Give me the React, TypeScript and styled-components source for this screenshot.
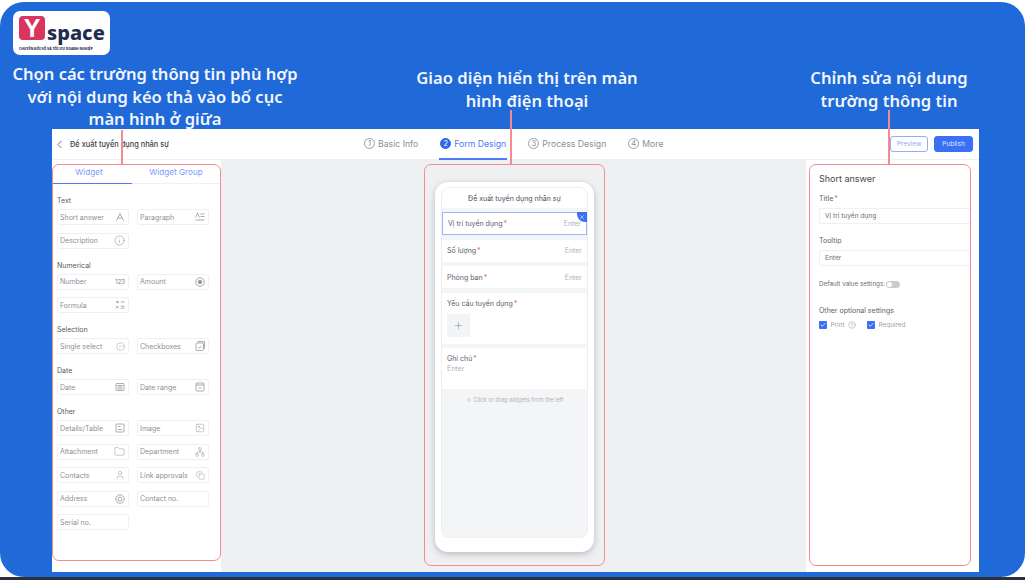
import React from 'react'
import styled, { createGlobalStyle } from 'styled-components'
import {
  ChevronLeft,
  CircleCheck,
  Copy,
  Folder,
  Image,
  Info,
  Network,
  Plus,
  User,
  X,
  Check,
  CircleHelp,
} from 'lucide-react'

const GlobalStyle = createGlobalStyle`
  html, body {
    margin: 0;
    padding: 0;
    background: #fff;
    overflow: hidden;
  }
  * {
    box-sizing: border-box;
  }
`

const Screen = styled.div`
  width: 1025px;
  height: 580px;
  display: flex;
  flex-direction: column;
  padding-top: 2px;
  background: linear-gradient(to bottom, #fff 577px, #2c3038 577px);
  font-family: Inter, 'Noto Sans', sans-serif;
`

const Slide = styled.div`
  height: 575px;
  background: #1f69d8;
  border-radius: 24px;
  display: flex;
  flex-direction: column;
`

const Captions = styled.div`
  height: 127px;
  display: grid;
  grid-template-columns: 300px 454px 270px;
`

const LeftCaption = styled.div`
  padding: 9px 0 0 13px;
  display: flex;
  flex-direction: column;
`

const Logo = styled.div`
  width: 97px;
  height: 44px;
  background: #fff;
  border-radius: 7px;
  padding: 5px 4px 0 6px;
  display: flex;
  flex-direction: column;
`

const LogoRow = styled.div`
  display: flex;
  align-items: flex-start;
  gap: 2px;
  height: 29px;
`

const LogoBadge = styled.div`
  width: 26px;
  height: 24px;
  background: #d9355f;
  border-radius: 4px;
  display: flex;
  align-items: center;
  justify-content: center;
  color: #fff;
  font-family: 'Liberation Sans', sans-serif;
  font-weight: 700;
  font-size: 25px;
  line-height: 24px;
`

const LogoWord = styled.div`
  margin-top: 6px;
  color: #1f2d50;
  font-family: 'Noto Sans', sans-serif;
  font-weight: 800;
  font-size: 20px;
  line-height: 22px;
`

const LogoTagline = styled.div`
  margin-top: 1px;
  color: #1f2d50;
  font-family: 'Noto Sans', sans-serif;
  font-weight: 800;
  font-size: 3.4px;
  line-height: 5px;
  white-space: nowrap;
`

const Heading = styled.div<{ $top: number }>`
  margin-top: ${(props) => props.$top}px;
  color: #f2f6fd;
  font-family: 'Noto Sans', sans-serif;
  font-weight: 600;
  font-size: 16.6px;
  line-height: 22.5px;
  text-align: center;
`

const LeftHeading = styled(Heading)`
  width: 290px;
  margin-left: -3px;
  font-size: 16.55px;
  white-space: nowrap;
`

const AppWindow = styled.div`
  width: 927px;
  height: 443px;
  margin-left: 52px;
  background: #fff;
  display: flex;
  flex-direction: column;
`

const TopBar = styled.div`
  height: 31px;
  flex: none;
  display: flex;
  align-items: stretch;
  border-bottom: 1px solid #f0f1f3;
`

const BackTitle = styled.div`
  width: 311px;
  display: flex;
  align-items: center;
  gap: 4px;
  padding-left: 1px;
  color: #3c4048;
  font-size: 7.4px;
  font-weight: 500;
  svg {
    color: #555;
  }
`

const Steps = styled.div`
  display: flex;
  gap: 20px;
  width: 527px;
`

const Step = styled.div<{ $active?: boolean }>`
  display: flex;
  align-items: center;
  gap: 3px;
  padding: 0 1px;
  height: 31px;
  font-size: 8.7px;
  white-space: nowrap;
  color: ${(props) => (props.$active ? '#4f7cf6' : '#8a8f98')};
  border-bottom: 2px solid ${(props) => (props.$active ? '#4f7cf6' : 'transparent')};
`

const StepNumber = styled.span<{ $active?: boolean }>`
  width: 11px;
  height: 11px;
  border-radius: 50%;
  display: flex;
  align-items: center;
  justify-content: center;
  font-size: 7.5px;
  border: 1px solid ${(props) => (props.$active ? '#2f66ee' : '#9a9ea6')};
  background: ${(props) => (props.$active ? '#2f66ee' : 'transparent')};
  color: ${(props) => (props.$active ? '#fff' : '#8a8f98')};
`

const Actions = styled.div`
  display: flex;
  align-items: center;
  gap: 6px;
`

const ActionButton = styled.div<{ $primary?: boolean }>`
  width: ${(props) => (props.$primary ? 39 : 38)}px;
  height: 16px;
  border-radius: 3px;
  display: flex;
  align-items: center;
  justify-content: center;
  font-size: 6.6px;
  border: 1px solid ${(props) => (props.$primary ? '#3a70f5' : '#8fb0f7')};
  background: ${(props) => (props.$primary ? '#3a70f5' : '#fff')};
  color: ${(props) => (props.$primary ? '#dfe8ff' : '#8fabf2')};
`

const Workspace = styled.div`
  flex: 1;
  display: flex;
  min-height: 0;
`

const Marked = styled.div`
  position: relative;
  border: 1.5px solid #f58a92;
  border-radius: 7px;
`

const Connector = styled.div<{ $height: number; $left: string }>`
  position: absolute;
  left: ${(props) => props.$left};
  top: ${(props) => -props.$height - 1}px;
  height: ${(props) => props.$height}px;
  width: 1.5px;
  background: #f58a92;
`

const LeftPane = styled.div`
  width: 169px;
  flex: none;
  padding: 4px 0 11px 0;
  background: #fff;
  display: flex;
`

const LeftBox = styled(Marked)`
  flex: 1;
`

const Tabs = styled.div`
  height: 19px;
  display: flex;
  border-bottom: 1px solid #eff0f2;
`

const Tab = styled.div<{ $active?: boolean }>`
  flex: ${(props) => (props.$active ? '0 0 79px' : 1)};
  display: flex;
  align-items: flex-start;
  justify-content: center;
  padding: 2px ${(props) => (props.$active ? 7 : 0)}px 0 0;
  font-size: 8.2px;
  line-height: 11px;
  color: #7d9cf7;
  margin-bottom: -1px;
  border-bottom: 1px solid ${(props) => (props.$active ? '#4f7cf6' : 'transparent')};
`

const Palette = styled.div`
  padding: 11px 0 0 4px;
`

const GroupLabel = styled.div`
  height: 11px;
  line-height: 11px;
  font-size: 7px;
  color: #555a63;
  margin-bottom: 3px;
`

const WidgetGrid = styled.div`
  display: grid;
  grid-template-columns: 72px 72px;
  column-gap: 8px;
  row-gap: 7.5px;
  margin-bottom: 11px;
`

const WidgetItem = styled.div`
  height: 16px;
  padding: 0 3px 0 2px;
  display: flex;
  align-items: center;
  justify-content: space-between;
  border: 1px solid #eff0f2;
  border-radius: 2px;
  font-size: 7px;
  color: #8c9097;
  white-space: nowrap;
  svg {
    flex: none;
    color: #92969d;
  }
`

const SmallDigits = styled.span`
  font-size: 6px;
  color: #777b83;
`

const Stage = styled.div`
  width: 585px;
  flex: none;
  background: #eef0f2;
  padding: 4px 0 6px 203px;
  display: flex;
`

const StageBox = styled(Marked)`
  width: 181px;
  padding: 16.5px 10px 0 10px;
`

const Phone = styled.div`
  height: 370px;
  padding: 5px 6px 14px 6px;
  background: #fff;
  border-radius: 13px;
  box-shadow: 0 2px 6px rgba(60, 64, 72, 0.3);
`

const PhoneInner = styled.div`
  height: 100%;
  background: #f4f5f7;
  border: 1px solid #eceef1;
  border-radius: 8px;
  display: flex;
  flex-direction: column;
  gap: 4.5px;
  overflow: hidden;
`

const PhoneTitle = styled.div`
  height: 20px;
  padding-top: 1px;
  background: #fff;
  display: flex;
  align-items: center;
  justify-content: center;
  font-size: 7px;
  color: #4a4e56;
`

const FormRow = styled.div<{ $selected?: boolean }>`
  position: relative;
  height: ${(props) => (props.$selected ? 23 : 22)}px;
  padding: 0 5px;
  display: flex;
  align-items: center;
  justify-content: space-between;
  background: #fff;
  font-size: 7px;
  color: #5c6068;
  border: ${(props) => (props.$selected ? '1px solid #9db7fa' : 'none')};
`

const FormBlock = styled.div<{ $height: number }>`
  height: ${(props) => props.$height}px;
  padding: 6px 5px 0 5px;
  background: #fff;
  font-size: 7px;
  color: #5c6068;
`

const Required = styled.span`
  color: #ee6a75;
  margin-left: 1px;
`

const Placeholder = styled.span`
  color: #aeb2b9;
`

const BlockPlaceholder = styled(Placeholder)`
  display: block;
  margin-top: 1px;
`

const CornerTag = styled.div`
  position: absolute;
  top: -1px;
  right: -1px;
  width: 10px;
  height: 10px;
  background: #3a70f5;
  border-bottom-left-radius: 8px;
  color: #fff;
  display: flex;
  align-items: center;
  justify-content: center;
`

const UploadBox = styled.div`
  width: 23px;
  height: 23px;
  margin-top: 6px;
  background: #f3f4f6;
  display: flex;
  align-items: center;
  justify-content: center;
  color: #84888f;
`

const DropHint = styled.div`
  margin-top: 3px;
  display: flex;
  align-items: center;
  justify-content: center;
  gap: 2px;
  font-size: 5.6px;
  color: #b0b3ba;
`

const RightPane = styled.div`
  flex: 1;
  padding: 4px 8px 6px 3px;
  background: #fff;
  display: flex;
`

const RightBox = styled(Marked)`
  flex: 1;
  padding: 8px 0 0 9px;
`

const PanelTitle = styled.div`
  font-size: 9px;
  line-height: 12px;
  color: #44484f;
`

const FieldLabel = styled.div`
  margin-top: 9px;
  font-size: 7px;
  line-height: 10px;
  color: #5c6068;
`

const FieldInput = styled.div`
  height: 16px;
  margin-top: 4px;
  padding-left: 5px;
  display: flex;
  align-items: center;
  border: 1px solid #eff0f2;
  border-right: none;
  border-radius: 2px 0 0 2px;
  font-size: 6.6px;
  color: #6a6e76;
`

const TooltipLabel = styled(FieldLabel)`
  margin-top: 12px;
`

const DefaultRow = styled.div`
  margin-top: 13px;
  display: flex;
  align-items: center;
  gap: 1px;
  font-size: 6.3px;
  color: #6a6e76;
  height: 10px;
`

const Toggle = styled.div`
  width: 14px;
  height: 7px;
  border-radius: 4px;
  background: #c9ccd1;
  padding: 1px;
  &::before {
    content: '';
    display: block;
    width: 5px;
    height: 5px;
    border-radius: 50%;
    background: #fff;
  }
`

const OptionalLabel = styled(FieldLabel)`
  margin-top: 17px;
`

const CheckRow = styled.div`
  margin-top: 5px;
  display: flex;
  gap: 11px;
`

const CheckOption = styled.div`
  display: flex;
  align-items: center;
  gap: 3.5px;
  font-size: 6.4px;
  color: #9b9fa6;
  svg {
    color: #8b8f96;
  }
`

const CheckMark = styled.span`
  width: 8px;
  height: 8px;
  border-radius: 1px;
  background: #3a70f5;
  display: flex;
  align-items: center;
  justify-content: center;
  svg {
    color: #fff;
  }
`

// small drawings with no matching lucide icon
const Glyph = ({ children }: { children: React.ReactNode }) => (
  <svg width="10" height="10" viewBox="0 0 10 10" fill="none" stroke="currentColor" strokeWidth="0.8">
    {children}
  </svg>
)

const icons: Record<string, React.ReactNode> = {
  letter: (
    <Glyph>
      <path d="M1.5 8.5 5 1.5l3.5 7M3 6h4" />
    </Glyph>
  ),
  paragraph: (
    <Glyph>
      <path d="M.5 5.5 2.5 1l2 4.5M5.5 2h4M5.5 4.5h4M.5 8h9" />
    </Glyph>
  ),
  info: <Info size={11} strokeWidth={1.3} />,
  digits: <SmallDigits>123</SmallDigits>,
  amount: (
    <Glyph>
      <circle cx="5" cy="5" r="4.3" />
      <circle cx="5" cy="5" r="1.8" fill="currentColor" />
    </Glyph>
  ),
  formula: (
    <Glyph>
      <path d="M1 2h3M2.5.8v2.4M1 6l2.5 2.5M3.5 6 1 8.5M5.8 2h3.7M5.8 6.2h3.7M5.8 8.2h3.7" />
    </Glyph>
  ),
  select: <CircleCheck size={9} strokeWidth={1.3} />,
  checks: (
    <Glyph>
      <rect x="1" y="2" width="7.5" height="7.5" rx="1" />
      <path d="M2.5.6h7v7M3 6l1.2 1.2L6.5 5" />
    </Glyph>
  ),
  date: (
    <Glyph>
      <rect x="1" y="1.5" width="8" height="7" rx="1" />
      <path d="M2.5 3.5h5M2.5 5h5M2.5 6.8h5" />
    </Glyph>
  ),
  range: (
    <Glyph>
      <rect x="1" y="1" width="8" height="8" rx="1" />
      <path d="M1 3h8M3.5 6h3" />
    </Glyph>
  ),
  table: (
    <Glyph>
      <rect x="1" y="1" width="8" height="8" rx="1" />
      <path d="M3 3.5h2.5M3 6.5h4" />
    </Glyph>
  ),
  image: <Image size={10} strokeWidth={1.1} />,
  folder: <Folder size={11} strokeWidth={1.1} />,
  department: <Network size={10} strokeWidth={1.2} />,
  user: <User size={10} strokeWidth={1.2} />,
  link: <Copy size={9} strokeWidth={1.2} />,
  address: (
    <Glyph>
      <circle cx="5" cy="5" r="4.2" />
      <circle cx="5" cy="5" r="2" />
    </Glyph>
  ),
}

const paletteGroups = [
  {
    label: 'Text',
    items: [
      ['Short answer', 'letter'],
      ['Paragraph', 'paragraph'],
      ['Description', 'info'],
    ],
  },
  {
    label: 'Numerical',
    items: [
      ['Number', 'digits'],
      ['Amount', 'amount'],
      ['Formula', 'formula'],
    ],
  },
  {
    label: 'Selection',
    items: [
      ['Single select', 'select'],
      ['Checkboxes', 'checks'],
    ],
  },
  {
    label: 'Date',
    items: [
      ['Date', 'date'],
      ['Date range', 'range'],
    ],
  },
  {
    label: 'Other',
    items: [
      ['Details/Table', 'table'],
      ['Image', 'image'],
      ['Attachment', 'folder'],
      ['Department', 'department'],
      ['Contacts', 'user'],
      ['Link approvals', 'link'],
      ['Address', 'address'],
      ['Contact no.', ''],
      ['Serial no.', ''],
    ],
  },
]

const steps = ['Basic Info', 'Form Design', 'Process Design', 'More']

function App() {
  return (
    <Screen>
      <GlobalStyle />
      <Slide>
        <Captions>
          <LeftCaption>
            <Logo>
              <LogoRow>
                <LogoBadge>Y</LogoBadge>
                <LogoWord>space</LogoWord>
              </LogoRow>
              <LogoTagline>CHUYỂN ĐỔI SỐ VÀ TỐI ƯU DOANH NGHIỆP</LogoTagline>
            </Logo>
            <LeftHeading $top={8}>
              Chọn các trường thông tin phù hợp
              <br />
              với nội dung kéo thả vào bố cục
              <br />
              màn hình ở giữa
            </LeftHeading>
          </LeftCaption>
          <Heading $top={65}>
            Giao diện hiển thị trên màn
            <br />
            hình điện thoại
          </Heading>
          <Heading $top={65}>
            Chỉnh sửa nội dung
            <br />
            trường thông tin
          </Heading>
        </Captions>
        <AppWindow>
          <TopBar>
            <BackTitle>
              <ChevronLeft size={13} strokeWidth={1.5} />
              Đề xuất tuyển dụng nhân sự
            </BackTitle>
            <Steps>
              {steps.map((step, index) => (
                <Step key={step} $active={index === 1}>
                  <StepNumber $active={index === 1}>{index + 1}</StepNumber>
                  {step}
                </Step>
              ))}
            </Steps>
            <Actions>
              <ActionButton>Preview</ActionButton>
              <ActionButton $primary>Publish</ActionButton>
            </Actions>
          </TopBar>
          <Workspace>
            <LeftPane>
              <LeftBox>
                <Connector $height={34} $left="68px" />
                <Tabs>
                  <Tab $active>Widget</Tab>
                  <Tab>Widget Group</Tab>
                </Tabs>
                <Palette>
                  {paletteGroups.map((group) => (
                    <div key={group.label}>
                      <GroupLabel>{group.label}</GroupLabel>
                      <WidgetGrid>
                        {group.items.map(([name, icon]) => (
                          <WidgetItem key={name}>
                            {name}
                            {icons[icon]}
                          </WidgetItem>
                        ))}
                      </WidgetGrid>
                    </div>
                  ))}
                </Palette>
              </LeftBox>
            </LeftPane>
            <Stage>
              <StageBox>
                <Connector $height={54} $left="85px" />
                <Phone>
                  <PhoneInner>
                    <PhoneTitle>Đề xuất tuyển dụng nhân sự</PhoneTitle>
                    <FormRow $selected>
                      <span>
                        Vị trí tuyển dụng<Required>*</Required>
                      </span>
                      <Placeholder>Enter</Placeholder>
                      <CornerTag>
                        <X size={6} strokeWidth={2} />
                      </CornerTag>
                    </FormRow>
                    <FormRow>
                      <span>
                        Số lượng<Required>*</Required>
                      </span>
                      <Placeholder>Enter</Placeholder>
                    </FormRow>
                    <FormRow>
                      <span>
                        Phòng ban<Required>*</Required>
                      </span>
                      <Placeholder>Enter</Placeholder>
                    </FormRow>
                    <FormBlock $height={51}>
                      Yêu cầu tuyển dụng<Required>*</Required>
                      <UploadBox>
                        <Plus size={11} strokeWidth={1.2} />
                      </UploadBox>
                    </FormBlock>
                    <FormBlock $height={41}>
                      Ghi chú<Required>*</Required>
                      <BlockPlaceholder>Enter</BlockPlaceholder>
                    </FormBlock>
                    <DropHint>
                      <Plus size={6} strokeWidth={2} />
                      Click or drag widgets from the left
                    </DropHint>
                  </PhoneInner>
                </Phone>
              </StageBox>
            </Stage>
            <RightPane>
              <RightBox>
                <Connector $height={54} $left="78px" />
                <PanelTitle>Short answer</PanelTitle>
                <FieldLabel>
                  Title<Required>*</Required>
                </FieldLabel>
                <FieldInput>Vị trí tuyển dụng</FieldInput>
                <TooltipLabel>Tooltip</TooltipLabel>
                <FieldInput>Enter</FieldInput>
                <DefaultRow>
                  Default value settings:
                  <Toggle />
                </DefaultRow>
                <OptionalLabel>Other optional settings</OptionalLabel>
                <CheckRow>
                  <CheckOption>
                    <CheckMark>
                      <Check size={6} strokeWidth={3} />
                    </CheckMark>
                    Print
                    <CircleHelp size={8} strokeWidth={1.3} />
                  </CheckOption>
                  <CheckOption>
                    <CheckMark>
                      <Check size={6} strokeWidth={3} />
                    </CheckMark>
                    Required
                  </CheckOption>
                </CheckRow>
              </RightBox>
            </RightPane>
          </Workspace>
        </AppWindow>
      </Slide>
    </Screen>
  )
}

export default App
